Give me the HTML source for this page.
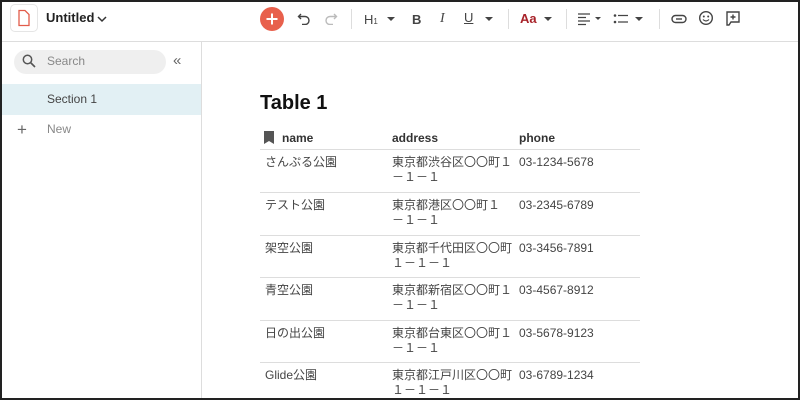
<!DOCTYPE html>
<html><head><meta charset="utf-8"><style>
*{margin:0;padding:0;box-sizing:border-box}
body{width:800px;height:400px;overflow:hidden;background:#fff;font-family:"Liberation Sans","Noto Sans CJK JP",sans-serif;color:#333;position:relative}
.frame{position:absolute;left:0;top:0;width:800px;height:400px;border:2px solid #222;z-index:10;pointer-events:none}
.a{position:absolute}
.topb{left:0;top:41px;width:800px;height:1px;background:#ddd}
.side{left:201px;top:42px;width:1px;height:358px;background:#ddd}
.ico{color:#444;font-size:13px}
.sep{width:1px;height:20px;top:9px;background:#ddd}
.car{width:0;height:0;border-left:4px solid transparent;border-right:4px solid transparent;border-top:4px solid #444;top:17px}
.cell{font-size:12px;line-height:15px;color:#444}
.hl{height:1px;background:#ddd;left:260px;width:380px}
.hd{font-size:12px;font-weight:bold;color:#333;top:131px}
</style></head><body>
<div class="frame"></div>
<div class="a" style="left:10px;top:4px;width:28px;height:28px;border:1px solid #e5e5e5;border-radius:5px"></div>
<svg class="a" style="left:16px;top:9px" width="16" height="18" viewBox="0 0 16 18"><path d="M3 1.5h6l4 4v11H3z" fill="none" stroke="#e25c4a" stroke-width="1.3"/></svg>
<div class="a" style="left:46px;top:10px;font-size:13px;font-weight:bold;color:#222">Untitled</div>
<svg class="a" style="left:97px;top:15px" width="10" height="8"><path d="M1 2l4 4 4-4" fill="none" stroke="#333" stroke-width="1.5"/></svg>
<div class="a" style="left:260px;top:7px;width:24px;height:24px;border-radius:50%;background:#e8604c"></div>
<svg class="a" style="left:264px;top:11px" width="16" height="16"><path d="M8 2.5v11M2.5 8h11" stroke="#fff" stroke-width="2"/></svg>
<svg class="a" style="left:297px;top:11px" width="14" height="14"><path d="M4 3L1.5 5.5 4 8M2 5.5h6a4 4 0 010 8H5" fill="none" stroke="#444" stroke-width="1.4"/></svg>
<svg class="a" style="left:324px;top:11px" width="14" height="14"><path d="M10 3l2.5 2.5L10 8M12 5.5H6a4 4 0 000 8h3" fill="none" stroke="#bbb" stroke-width="1.4"/></svg>
<div class="a sep" style="left:351px"></div>
<div class="a ico" style="left:364px;top:12px">H<span style="font-size:8px">1</span></div>
<div class="a car" style="left:387px"></div>
<div class="a ico" style="left:412px;top:12px;font-weight:bold">B</div>
<div class="a ico" style="left:440px;top:11px;font-style:italic;font-family:'Liberation Serif',serif;font-size:14px">I</div>
<div class="a ico" style="left:464px;top:10px;text-decoration:underline">U</div>
<div class="a car" style="left:485px"></div>
<div class="a sep" style="left:508px"></div>
<div class="a" style="left:520px;top:11px;font-size:13px;font-weight:bold;color:#a8232a">Aa</div>
<div class="a car" style="left:544px"></div>
<div class="a sep" style="left:566px"></div>
<svg class="a" style="left:577px;top:12px" width="14" height="14"><path d="M1 2h12M1 5.5h8M1 9h12M1 12.5h8" stroke="#444" stroke-width="1.3"/></svg>
<div class="a car" style="left:595px;border-width:3.5px 3px 0"></div>
<svg class="a" style="left:613px;top:12px" width="16" height="14"><circle cx="2" cy="3.5" r="1.3" fill="#444"/><circle cx="2" cy="10" r="1.3" fill="#444"/><path d="M5 3.5h10M5 10h10" stroke="#444" stroke-width="1.3"/></svg>
<div class="a car" style="left:635px"></div>
<div class="a sep" style="left:659px"></div>
<svg class="a" style="left:671px;top:12px" width="16" height="14"><rect x="1" y="3.5" width="14" height="7" rx="3.5" fill="none" stroke="#444" stroke-width="1.4"/><path d="M5 7h6" stroke="#444" stroke-width="1.4"/></svg>
<svg class="a" style="left:698px;top:10px" width="16" height="16"><circle cx="8" cy="8" r="6.3" fill="none" stroke="#444" stroke-width="1.4"/><circle cx="5.8" cy="6.5" r="1" fill="#444"/><circle cx="10.2" cy="6.5" r="1" fill="#444"/><path d="M5 9.5q3 3 6 0" fill="none" stroke="#444" stroke-width="1.2"/></svg>
<svg class="a" style="left:725px;top:10px" width="16" height="17"><path d="M2 2h12v10H6l-2 3H2z" fill="none" stroke="#444" stroke-width="1.4"/><path d="M8 4.5v5M5.5 7h5" stroke="#444" stroke-width="1.4"/></svg>
<div class="a topb"></div>
<div class="a side"></div>
<div class="a" style="left:14px;top:50px;width:152px;height:24px;border-radius:12px;background:#efefef"></div>
<svg class="a" style="left:22px;top:54px" width="14" height="14"><circle cx="5.5" cy="5.5" r="4.2" fill="none" stroke="#555" stroke-width="1.5"/><path d="M8.5 8.5l4.5 4.5" stroke="#555" stroke-width="1.6"/></svg>
<div class="a" style="left:47px;top:54px;font-size:12px;color:#888">Search</div>
<div class="a" style="left:173px;top:52px;font-size:15px;color:#666">«</div>
<div class="a" style="left:0;top:84px;width:201px;height:31px;background:#e2f0f4"></div>
<div class="a" style="left:47px;top:92px;font-size:12px;color:#444">Section 1</div>
<div class="a" style="left:17px;top:120px;font-size:17px;color:#666">+</div>
<div class="a" style="left:47px;top:122px;font-size:12px;color:#888">New</div>
<div class="a" style="left:260px;top:92px;font-size:20px;font-weight:bold;color:#111">Table 1</div>
<svg class="a" style="left:264px;top:131px" width="10" height="13"><path d="M0 0h10v13L5 10 0 13z" fill="#555"/></svg>
<div class="a hd" style="left:282px">name</div>
<div class="a hd" style="left:392px">address</div>
<div class="a hd" style="left:519px">phone</div>
<div class="a hl" style="top:149px"></div>
<div class="a hl" style="top:192px"></div>
<div class="a hl" style="top:235px"></div>
<div class="a hl" style="top:277px"></div>
<div class="a hl" style="top:320px"></div>
<div class="a hl" style="top:362px"></div>

<div class="a cell" style="left:265px;top:155px">さんぷる公園</div>
<div class="a cell" style="left:392px;top:155px">東京都渋谷区〇〇町１<br>－１－１</div>
<div class="a cell" style="left:519px;top:155px">03-1234-5678</div>

<div class="a cell" style="left:265px;top:198px">テスト公園</div>
<div class="a cell" style="left:392px;top:198px">東京都港区〇〇町１<br>－１－１</div>
<div class="a cell" style="left:519px;top:198px">03-2345-6789</div>

<div class="a cell" style="left:265px;top:241px">架空公園</div>
<div class="a cell" style="left:392px;top:241px">東京都千代田区〇〇町<br>１－１－１</div>
<div class="a cell" style="left:519px;top:241px">03-3456-7891</div>

<div class="a cell" style="left:265px;top:283px">青空公園</div>
<div class="a cell" style="left:392px;top:283px">東京都新宿区〇〇町１<br>－１－１</div>
<div class="a cell" style="left:519px;top:283px">03-4567-8912</div>

<div class="a cell" style="left:265px;top:326px">日の出公園</div>
<div class="a cell" style="left:392px;top:326px">東京都台東区〇〇町１<br>－１－１</div>
<div class="a cell" style="left:519px;top:326px">03-5678-9123</div>

<div class="a cell" style="left:265px;top:368px">Glide公園</div>
<div class="a cell" style="left:392px;top:368px">東京都江戸川区〇〇町<br>１－１－１</div>
<div class="a cell" style="left:519px;top:368px">03-6789-1234</div>
</body></html>
